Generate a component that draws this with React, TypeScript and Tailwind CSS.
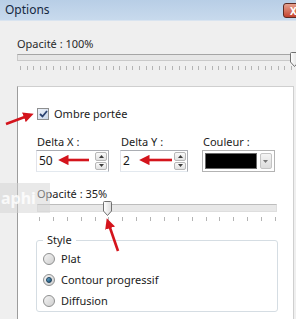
import React from "react"

function Ticks({ count, className = "" }: { count: number; className?: string }) {
  return (
    <div className={`flex justify-between h-[4px] ${className}`}>
      {Array.from({ length: count }).map((_, i) => (
        <span key={i} className="w-px h-full bg-[#b4b4b4]" />
      ))}
    </div>
  )
}

function Thumb() {
  return (
    <svg width="9" height="15" viewBox="0 0 9 15">
      <defs>
        <linearGradient id="thumbg" x1="0" y1="0" x2="1" y2="0">
          <stop offset="0" stopColor="#ffffff" />
          <stop offset="1" stopColor="#dcdcdc" />
        </linearGradient>
      </defs>
      <path d="M0.5 1.5 Q0.5 0.5 1.5 0.5 H7.5 Q8.5 0.5 8.5 1.5 V10 L4.5 14.5 L0.5 10 Z" fill="url(#thumbg)" stroke="#707070" />
    </svg>
  )
}

function SpinButtons() {
  return (
    <div className="flex flex-col gap-px w-[13px] h-full py-px pr-px">
      {[0, 1].map((i) => (
        <div
          key={i}
          className="flex-1 flex items-center justify-center border border-[#b7b7b7] rounded-[2px] bg-gradient-to-b from-[#fafafa] to-[#e1e1e1]"
        >
          <svg width="5" height="3" viewBox="0 0 5 3">
            {i === 0 ? <path d="M0 3 L2.5 0 L5 3 Z" fill="#3c3c3c" /> : <path d="M0 0 L2.5 3 L5 0 Z" fill="#3c3c3c" />}
          </svg>
        </div>
      ))}
    </div>
  )
}

function NumberBox({ value, width }: { value: string; width: string }) {
  return (
    <div className={`flex h-[22px] ${width} border border-[#abadb3] border-l-[#e2e3ea] border-b-[#e3e9ef] bg-white`}>
      <span className="flex-1 pl-[2px] leading-[20px] text-[12px] text-[#1a1a1a]">{value}</span>
      <SpinButtons />
    </div>
  )
}

function Radio({ checked, label }: { checked?: boolean; label: string }) {
  return (
    <div className="flex items-center h-[21px] gap-[6px]">
      <span className="w-[12px] h-[12px] rounded-full border border-[#8e8f8f] bg-gradient-to-br from-[#f4f4f4] to-[#cfcfcf] flex items-center justify-center">
        {checked && (
          <span className="w-[6px] h-[6px] rounded-full bg-gradient-to-br from-[#6fb1d6] to-[#164f73] border border-[#1c3e58]" />
        )}
      </span>
      <span>{label}</span>
    </div>
  )
}

export default function App() {
  return (
    <div className="relative w-[296px] h-[319px] overflow-hidden bg-[#efefef] font-['Segoe_UI','Noto_Sans',sans-serif] text-[11px] leading-[16px] text-[#1b1b1b]">
      {/* title bar */}
      <div className="flex items-center justify-between h-[21px] pl-[5px] bg-gradient-to-b from-[#b8cee6] to-[#c8daed] border-b border-[#d9e4f0]">
        <span className="text-[12px] text-[#15283f]">Options</span>
        <div className="w-[26px] h-[15px] -mr-[13px] mt-[1px] rounded-[3px] border border-[#5d2a22] bg-gradient-to-b from-[#e4a08e] to-[#c3402c] flex items-center pl-[6px]">
          <span className="text-white text-[10px] font-bold leading-none">X</span>
        </div>
      </div>

      {/* top opacity */}
      <div className="pl-[17px] pt-[15px]">
        <div className="text-[#2a2a2a]">Opacité : 100%</div>
        <div className="relative mt-[2px] w-[277px] h-[7px] border border-[#c9c9c9] border-t-[#a5a5a5] bg-[#e6e6e6]">
          <div className="absolute -right-[6px] -top-[3px]">
            <Thumb />
          </div>
        </div>
        <Ticks count={42} className="mt-[5px] w-[272px] ml-[3px]" />
      </div>

      {/* effect panel */}
      <div className="ml-[17px] mt-[16px] w-[277px] h-[240px] bg-white border border-[#cfcfcf] border-l-[#9c9c9c]">
        <div className="pl-[18px] pt-[19px]">
          <div className="flex items-center h-[16px] gap-[5px] pl-px">
            <span className="w-[12px] h-[12px] border border-[#8e8f8f] bg-gradient-to-br from-[#eef3fb] to-[#c9d6e8] flex items-center justify-center">
              <svg width="9" height="8" viewBox="0 0 9 8">
                <path d="M1 4 L3.5 6.5 L8 1" fill="none" stroke="#2a4270" strokeWidth="1.8" />
              </svg>
            </span>
            <span>Ombre portée</span>
          </div>

          <div className="flex mt-[12px]">
            <div className="w-[73px]">
              <div className="pl-px">Delta X :</div>
              <NumberBox value="50" width="w-[73px]" />
            </div>
            <div className="w-[68px] ml-[11px]">
              <div className="pl-px">Delta Y :</div>
              <NumberBox value="2" width="w-[68px]" />
            </div>
            <div className="w-[73px] ml-[14px]">
              <div className="pl-px">Couleur :</div>
              <div className="flex items-center gap-[3px] h-[22px] border border-[#b3b3b3] p-[2px]">
                <span className="w-[54px] h-[16px] bg-black border border-[#6a6a6a]" />
                <span className="w-[13px] h-[16px] border border-[#c4c4c4] rounded-[2px] bg-gradient-to-b from-[#f4f4f4] to-[#dcdcdc] flex items-center justify-center">
                  <svg width="5" height="3" viewBox="0 0 5 3">
                    <path d="M0 0 L2.5 3 L5 0 Z" fill="#777" />
                  </svg>
                </span>
              </div>
            </div>
          </div>

          <div className="mt-[14px] pl-px">Opacité : 35%</div>
          <div className="relative mt-[2px] w-[240px] h-[8px] border border-[#dedede] border-t-[#bdbdbd] bg-[#e8e8e8] ml-px">
            <div className="absolute left-[65px] -top-[4px]">
              <Thumb />
            </div>
          </div>
          <Ticks count={18} className="mt-[5px] w-[237px] ml-[3px]" />

          <fieldset className="mt-[11px] w-[242px] h-[80px] border border-[#d5dde3] rounded-[3px] pl-[6px]">
            <legend className="ml-0 px-[4px] leading-[16px]">Style</legend>
            <Radio label="Plat" />
            <Radio checked label="Contour progressif" />
            <Radio label="Diffusion" />
          </fieldset>
        </div>
      </div>

      {/* watermark */}
      <div className="absolute left-0 top-[183px] w-[50px] h-[30px] bg-[#d4d4d4]/50 flex items-center pl-px">
        <span className="text-[16px] font-bold text-white/80 leading-none">aphi</span>
      </div>

      {/* annotation arrows */}
      <svg className="absolute inset-0 pointer-events-none" width="296" height="319" viewBox="0 0 296 319">
        <defs>
          <marker id="ah" markerWidth="4" markerHeight="4" refX="2.5" refY="2" orient="auto" markerUnits="strokeWidth">
            <path d="M0 0 L4 2 L0 4 Z" fill="#d4141c" />
          </marker>
        </defs>
        <g stroke="#d4141c" strokeWidth="2.6" markerEnd="url(#ah)" fill="none">
          <line x1="6" y1="124" x2="30" y2="115" />
          <line x1="89" y1="160" x2="62" y2="160" />
          <line x1="172" y1="160" x2="143" y2="160" />
          <line x1="118" y1="251" x2="108" y2="222" />
        </g>
      </svg>
    </div>
  )
}
